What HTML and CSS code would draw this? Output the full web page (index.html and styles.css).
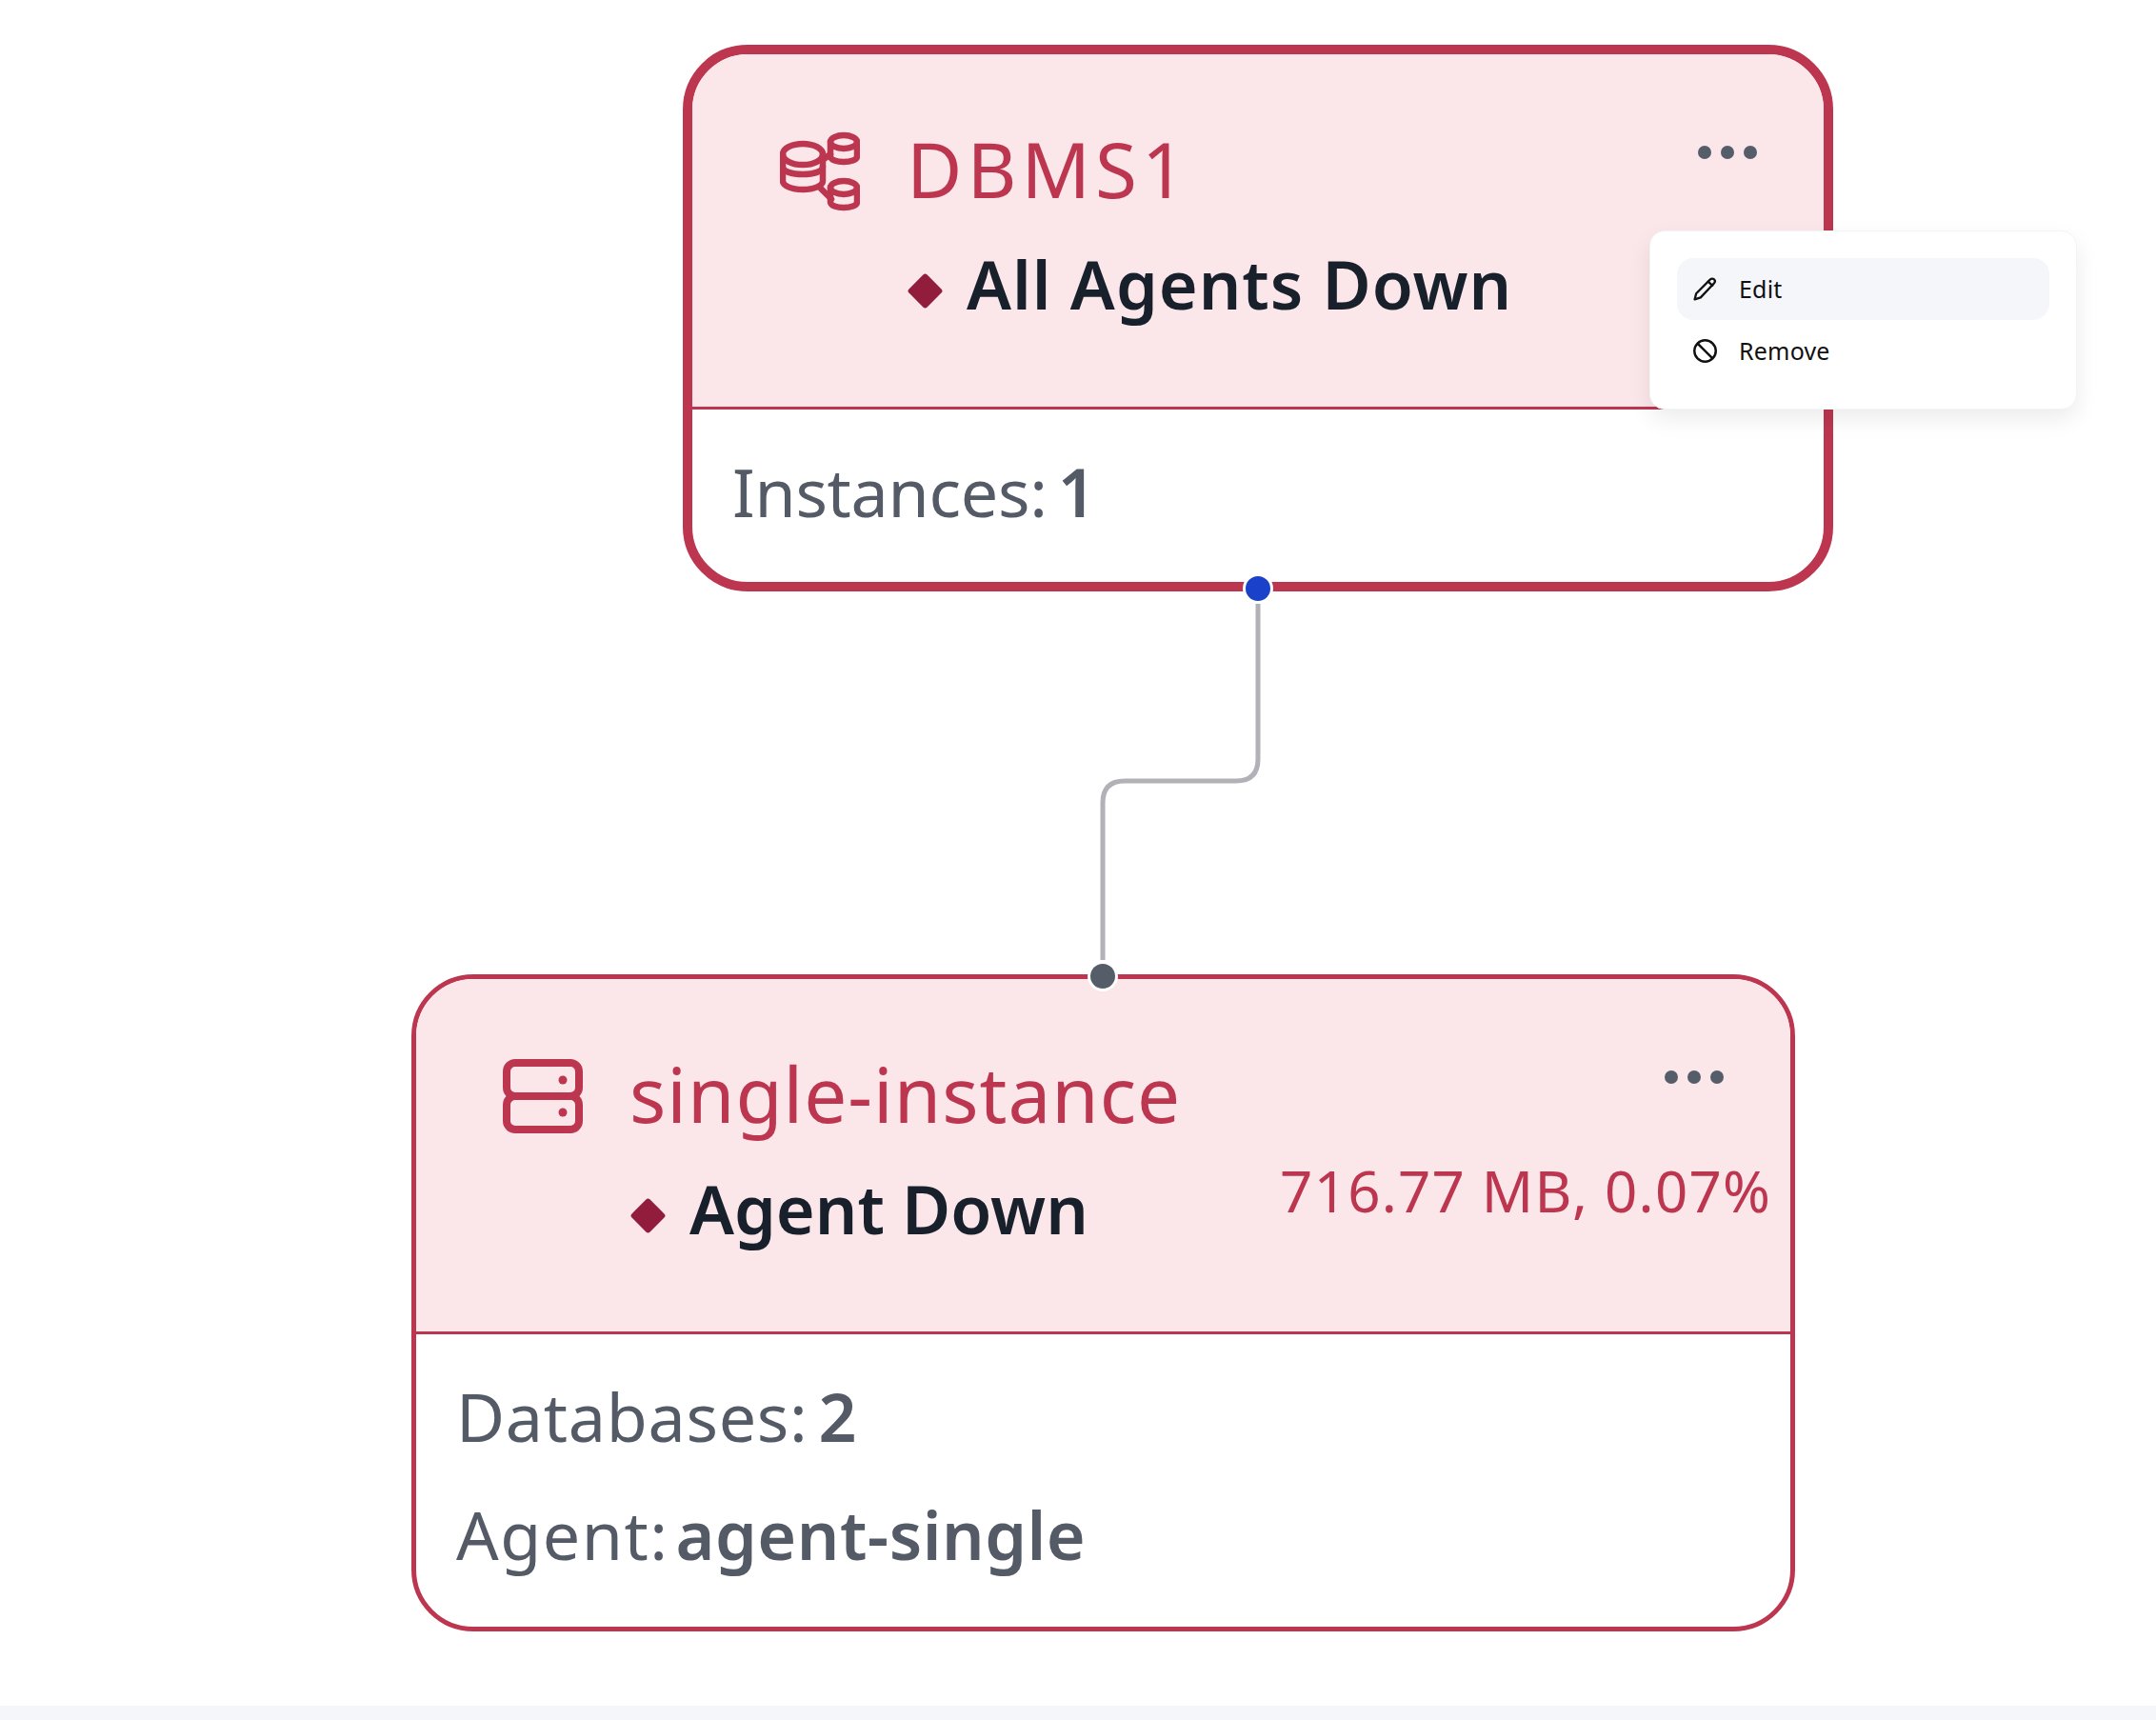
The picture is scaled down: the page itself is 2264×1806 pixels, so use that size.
FILE: index.html
```
<!DOCTYPE html>
<html lang="en">
<head>
<meta charset="utf-8">
<title>Topology</title>
<link rel="stylesheet" href="styles.css">
</head>
<body>
<main class="canvas">
  <article class="node node-dbms">
    <header class="node-head">
      <svg class="node-icon icon-dbms" viewBox="0 0 84 84" fill="none" stroke="currentColor" stroke-width="6.500" stroke-linecap="round" stroke-linejoin="round">
        <ellipse cx="24" cy="24" rx="21" ry="11"/>
        <path d="M3 24V52C3 57 12 61 24 61S45 57 45 52V24"/>
        <path d="M3 37C3 42 12 45 24 45S45 42 45 37"/>
        <ellipse cx="67" cy="11" rx="14" ry="7"/>
        <path d="M53 11V26C53 30 60 32 67 32S81 30 81 26V11"/>
        <ellipse cx="67" cy="59" rx="14" ry="7"/>
        <path d="M53 59V74C53 78 60 80 67 80S81 78 81 74V59"/>
        <path d="M46 29L53 24M43 60L54 71"/>
      </svg>
      <div class="node-main">
        <h2 class="node-title title-dbms">DBMS1</h2>
        <div class="status"><span class="diamond"></span><span class="status-text status-all">All Agents Down</span></div>
      </div>
      <div class="node-side">
        <div class="dots"><i></i><i></i><i></i></div>
      </div>
    </header>
    <section class="node-body">
      <p class="row"><span class="label label-instances">Instances:</span><b class="value">1</b></p>
    </section>
  </article>

  <article class="node node-instance">
    <header class="node-head">
      <svg class="node-icon icon-server" viewBox="0 0 84 78" fill="none" stroke="currentColor" stroke-width="8" stroke-linejoin="round">
        <rect x="4" y="4" width="76" height="35" rx="9"/>
        <rect x="4" y="39" width="76" height="35" rx="9"/>
        <circle cx="63" cy="22" r="4.500" fill="currentColor" stroke="none"/>
        <circle cx="63" cy="56" r="4.500" fill="currentColor" stroke="none"/>
      </svg>
      <div class="node-main">
        <h2 class="node-title title-instance">single-instance</h2>
        <div class="status"><span class="diamond"></span><span class="status-text">Agent Down</span></div>
      </div>
      <div class="node-side">
        <div class="dots"><i></i><i></i><i></i></div>
        <div class="metric">716.77 MB, 0.07%</div>
      </div>
    </header>
    <section class="node-body">
      <p class="row"><span class="label label-db">Databases:</span><b class="value">2</b></p>
      <p class="row"><span class="label label-agent">Agent:</span><b class="value value-agent">agent-single</b></p>
    </section>
  </article>

  <svg class="edge" viewBox="0 0 2264 1791" fill="none">
    <path d="M1321 634V797Q1321 820 1298 820H1181Q1158 820 1158 843V1008"/>
  </svg>
  <span class="handle handle-source"></span>
  <span class="handle handle-target"></span>

  <nav class="menu">
    <a class="menu-item active">
      <svg class="menu-icon" viewBox="0 0 24 24" fill="none" stroke="currentColor" stroke-width="2.200" stroke-linejoin="round" stroke-linecap="round">
        <path d="M17 2.500a2.500 2.500 0 0 1 4.200 3.500L7.500 20.500 1.500 22.500 3 16.500Z"/>
        <path d="M15 4.500l4.500 4"/>
      </svg>
      <span class="menu-label">Edit</span>
    </a>
    <a class="menu-item">
      <svg class="menu-icon" viewBox="0 0 24 24" fill="none" stroke="currentColor" stroke-width="2.400">
        <circle cx="12" cy="12" r="10.800"/>
        <path d="M4.400 4.400L19.600 19.600"/>
      </svg>
      <span class="menu-label">Remove</span>
    </a>
  </nav>
</main>
<div class="strip"></div>
</body>
</html>
```
FILE: styles.css
```
* { box-sizing: border-box; }
html, body { margin: 0; padding: 0; background: #fff; }
body { font-family: "Noto Sans", "Lato", sans-serif; overflow: hidden; }

.canvas { position: relative; height: 1791px; }
.strip { height: 15px; background: #f5f6fa; }

.node {
  position: absolute;
  display: flex;
  flex-direction: column;
  background: #fff;
  border: solid #bd3650;
  overflow: hidden;
}
.node-dbms { left: 717px; top: 47px; width: 1208px; height: 574px; border-width: 10px; border-radius: 68px; }
.node-instance { left: 432px; top: 1023px; width: 1453px; height: 690px; border-width: 5px; border-radius: 65px; }

.node-head {
  display: flex;
  height: 373px;
  background: #fbe6e9;
  border-bottom: 3px solid #bd3650;
  color: #bd3650;
}

.node-icon { flex: none; display: block; }
.icon-dbms { width: 84px; height: 84px; margin: 81px 49px 0 92px; }
.icon-server { width: 84px; height: 78px; margin: 84px 49px 0 91px; }

.node-main { padding-top: 70px; flex: 1; min-width: 0; }
.node-title { margin: 0; font-size: 80px; line-height: 100px; font-weight: 400; }
.title-dbms { letter-spacing: 5px; }
.title-instance { letter-spacing: 1px; }

.status { display: flex; align-items: center; gap: 25px; margin-top: 21px; height: 100px; }
.status-text { font-size: 70px; line-height: 100px; font-weight: 600; color: #18202b; white-space: nowrap; }
.status-all { letter-spacing: 1px; }
.diamond { flex: none; width: 27px; height: 27px; margin: 19px 5.500px 5px; background: #911c3c; border-radius: 3px; transform: rotate(45deg); }

.node-side { flex: none; display: flex; flex-direction: column; align-items: flex-end; padding: 96px 20px 0 0; }
.dots { display: flex; gap: 10px; margin-right: 50px; }
.dots i { width: 14px; height: 14px; border-radius: 50%; background: #555d68; }
.metric { margin-top: 72px; font-size: 60px; line-height: 80px; font-weight: 400; letter-spacing: 1.200px; white-space: nowrap; }

.node-body { padding: 36px 0 0 42px; color: #545b66; }
.row { margin: 0 0 24px; font-size: 70px; line-height: 100px; display: flex; gap: 11px; }
.label { font-weight: 400; }
.label-instances { letter-spacing: -.3px; }
.label-db { letter-spacing: .7px; }
.label-agent { letter-spacing: 1.500px; }
.value { font-weight: 600; }
.value-agent { letter-spacing: .5px; margin-left: -4px; }

.edge { position: absolute; left: 0; top: 0; width: 2264px; height: 1791px; pointer-events: none; }
.edge path { stroke: #b1b1b7; stroke-width: 5px; }

.handle { position: absolute; width: 32px; height: 32px; border-radius: 50%; border: 3px solid #fff; }
.handle-source { left: 1305px; top: 602px; background: #1a41c9; }
.handle-target { left: 1142px; top: 1009px; background: #555d68; }

.menu {
  position: absolute;
  left: 1732px;
  top: 242px;
  width: 449px;
  height: 188px;
  padding: 28px;
  background: #fff;
  border: 1px solid #f3f4f6;
  border-radius: 16px;
  box-shadow: 0 10px 25px rgba(0, 0, 0, .08);
}
.menu-item { display: flex; align-items: center; gap: 23px; height: 65px; padding-left: 17px; border-radius: 17px; font-size: 25px; color: #111; }
.menu-item.active { background: #f5f6fa; }
.menu-icon { flex: none; width: 25px; height: 25px; }
.menu-label { position: relative; top: -1px; letter-spacing: .2px; }
```
